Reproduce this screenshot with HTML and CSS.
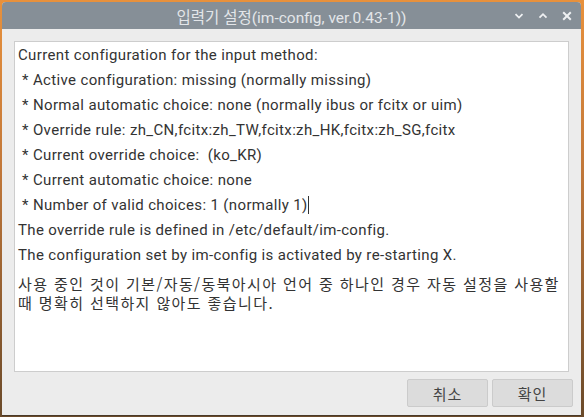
FILE: index.html
```html
<!DOCTYPE html>
<html lang="ko">
<head>
<meta charset="utf-8">
<title>입력기 설정</title>
<link rel="stylesheet" href="styles.css">
</head>
<body>
<div class="desktop">
  <div class="window">
    <div class="titlebar">
      <span></span>
      <span class="title">입력기 설정(im-config, ver.0.43-1))</span>
      <div class="controls">
        <svg class="ctl" width="10" height="10" viewBox="0 0 10 10"><path d="M1.5 3.2 L5 6.6 L8.5 3.2" fill="none" stroke="#eef0f2" stroke-width="1.8"/></svg>
        <svg class="ctl" width="10" height="10" viewBox="0 0 10 10"><path d="M1.5 6.6 L5 3.2 L8.5 6.6" fill="none" stroke="#eef0f2" stroke-width="1.8"/></svg>
        <svg class="ctl" width="10" height="10" viewBox="0 0 10 10"><path d="M1.2 1.2 L8.8 8.8 M8.8 1.2 L1.2 8.8" fill="none" stroke="#eef0f2" stroke-width="2"/></svg>
      </div>
    </div>
    <div class="content">
      <div class="textbox">
        <div class="line">Current configuration for the input method:</div>
        <div class="line"> * Active configuration: missing (normally missing)</div>
        <div class="line"> * Normal automatic choice: none (normally ibus or fcitx or uim)</div>
        <div class="line"> * Override rule: zh_CN,fcitx:zh_TW,fcitx:zh_HK,fcitx:zh_SG,fcitx</div>
        <div class="line"> * Current override choice:  (ko_KR)</div>
        <div class="line"> * Current automatic choice: none</div>
        <div class="line"> * Number of valid choices: 1 (normally 1)<span class="caret"></span></div>
        <div class="line">The override rule is defined in /etc/default/im-config.</div>
        <div class="line">The configuration set by im-config is activated by re-starting X.</div>
        <div class="para">사용 중인 것이 기본/자동/동북아시아 언어 중 하나인 경우 자동 설정을 사용할 때 명확히 선택하지 않아도 좋습니다.</div>
      </div>
      <div class="buttons">
        <button class="btn">취소</button>
        <button class="btn">확인</button>
      </div>
    </div>
  </div>
</div>
</body>
</html>
```
FILE: styles.css
```css
html, body {
  margin: 0;
  padding: 0;
}
body {
  width: 584px;
  height: 417px;
  overflow: hidden;
  background: linear-gradient(180deg, #e8913c 0%, #c2783a 40%, #6a4a2a 100%);
  font-family: Roboto, "Noto Sans CJK KR", sans-serif;
}
.desktop {
  padding: 2px 3px 1px 2px;
}
.window {
  width: 579px;
  height: 414px;
  display: flex;
  flex-direction: column;
  border-radius: 4px 4px 0 0;
  overflow: hidden;
  background: #ececec;
  border-bottom: 1px solid #4a3a28;
  box-sizing: border-box;
}
.titlebar {
  height: 27px;
  flex: none;
  background: #868f97;
  display: grid;
  grid-template-columns: 1fr auto 1fr;
  align-items: center;
}
.title {
  color: #e3e6e9;
  font-size: 15.5px;
  font-family: Roboto, "Noto Sans CJK KR", sans-serif;
  white-space: nowrap;
}
.controls {
  justify-self: end;
  display: flex;
  align-items: center;
  gap: 14px;
  padding-right: 9px;
}
.ctl {
  display: block;
}
.content {
  flex: 1;
  display: flex;
  flex-direction: column;
}
.textbox {
  flex: 1;
  margin: 12px 12px 0 12px;
  background: #ffffff;
  border: 1px solid #cdcdcd;
  padding: 1px 3px 0;
  color: #333333;
  font-size: 15px;
  letter-spacing: 0.35px;
}
.line {
  line-height: 25px;
  white-space: pre;
}
.caret {
  display: inline-block;
  width: 1px;
  height: 18px;
  background: #333;
  vertical-align: -4px;
}
.para {
  line-height: 19px;
  margin-top: 6px;
  font-size: 15px;
  letter-spacing: 1.4px;
  font-family: "Noto Sans CJK KR", Roboto, sans-serif;
}
.buttons {
  display: flex;
  justify-content: flex-end;
  gap: 4px;
  padding: 7px 8px 8px 0;
}
.btn {
  width: 81px;
  height: 28px;
  background: #dcdcdc;
  border: 1px solid #cbcbcb;
  border-radius: 2px;
  color: #444;
  font-size: 15px;
  letter-spacing: 1px;
  font-family: "Noto Sans CJK KR", sans-serif;
  padding: 0;
}
```
